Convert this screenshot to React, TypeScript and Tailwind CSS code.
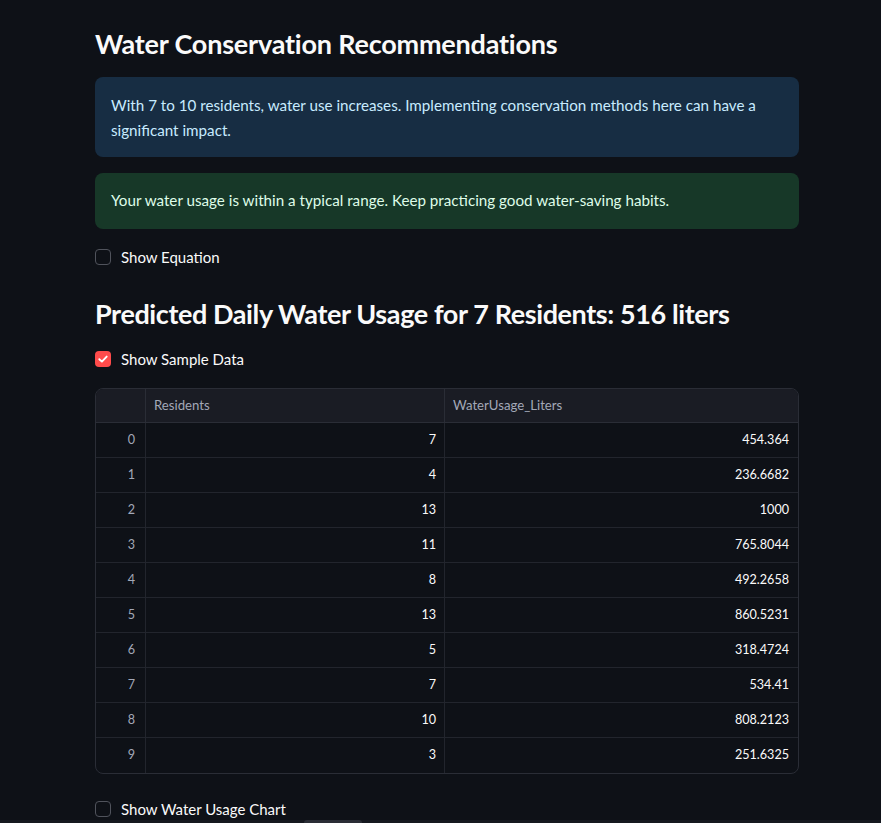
import React from "react";

const rows: [number, string][] = [
  [7, "454.364"],
  [4, "236.6682"],
  [13, "1000"],
  [11, "765.8044"],
  [8, "492.2658"],
  [13, "860.5231"],
  [5, "318.4724"],
  [7, "534.41"],
  [10, "808.2123"],
  [3, "251.6325"],
];

function Checkbox({ checked, label }: { checked?: boolean; label: string }) {
  return (
    <div className="flex items-center h-6 gap-[10px]">
      {checked ? (
        <div className="w-4 h-4 rounded-[4px] bg-[#ff4b4b] flex items-center justify-center">
          <svg width="12" height="12" viewBox="0 0 12 12" fill="none">
            <path d="M2.3 6.2 L4.9 8.6 L9.7 3.6" stroke="white" strokeWidth="1.9" strokeLinecap="round" strokeLinejoin="round" />
          </svg>
        </div>
      ) : (
        <div className="w-4 h-4 rounded-[4px] border border-[#50535c] bg-[#0e1117]" />
      )}
      <span className="text-[15px] text-[#fafafa] leading-6">{label}</span>
    </div>
  );
}

export default function App() {
  return (
    <div
      className="w-[881px] h-[823px] bg-[#0e1117] overflow-hidden relative"
      style={{ fontFamily: "Lato, 'Noto Sans', sans-serif" }}
    >
      <div className="ml-[95px] w-[704px] flex flex-col">
        <h2 className="mt-[26px] h-9 leading-9 text-[27px] font-bold text-[#fafafa] tracking-[-0.2px]">
          Water Conservation Recommendations
        </h2>
        <div className="mt-[15px] rounded-lg bg-[#172d43] px-4 pt-[16px] pb-[14px] text-[15.2px] leading-[25px] text-[#c7ebff]">
          With 7 to 10 residents, water use increases. Implementing conservation methods here can have a significant impact.
        </div>
        <div className="mt-[16px] rounded-lg bg-[#173828] px-4 pt-[15px] pb-[16px] text-[15.2px] leading-[25px] text-[#dffde9]">
          Your water usage is within a typical range. Keep practicing good water-saving habits.
        </div>
        <div className="mt-[16px]">
          <Checkbox label="Show Equation" />
        </div>
        <h2 className="mt-[27px] h-9 leading-9 text-[27px] font-bold text-[#fafafa] tracking-[-0.4px]">
          Predicted Daily Water Usage for 7 Residents: 516 liters
        </h2>
        <div className="mt-[15px]">
          <Checkbox checked label="Show Sample Data" />
        </div>
        <div className="mt-[17px] rounded-lg border border-[#2a2d36] overflow-hidden">
          <div className="flex h-[34px] bg-[#1a1c24] border-b border-[#2a2d36] text-[13.2px] text-[#a3a8b8]">
            <div className="w-[50px] border-r border-[#2a2d36]" />
            <div className="w-[299px] border-r border-[#2a2d36] flex items-center pl-2">Residents</div>
            <div className="flex-1 flex items-center pl-2">WaterUsage_Liters</div>
          </div>
          {rows.map(([r, w], i) => (
            <div
              key={i}
              className={`flex h-[35px] text-[12.6px] ${i < rows.length - 1 ? "border-b border-[#22252d]" : ""}`}
            >
              <div className="w-[50px] border-r border-[#22252d] flex items-center justify-end pr-[10px] text-[#a3a8b8]">
                {i}
              </div>
              <div className="w-[299px] border-r border-[#22252d] flex items-center justify-end pr-2 text-[#fafafa]">
                {r}
              </div>
              <div className="flex-1 flex items-center justify-end pr-[9px] text-[#fafafa]">{w}</div>
            </div>
          ))}
        </div>
        <div className="mt-[23px]">
          <Checkbox label="Show Water Usage Chart" />
        </div>
      </div>
      <div className="absolute left-0 right-0 bottom-0 h-[3px] bg-[#15181f]">
        <div className="absolute left-[304px] w-[58px] top-0 h-[3px] rounded-t bg-[#2a2d35]" />
      </div>
    </div>
  );
}
